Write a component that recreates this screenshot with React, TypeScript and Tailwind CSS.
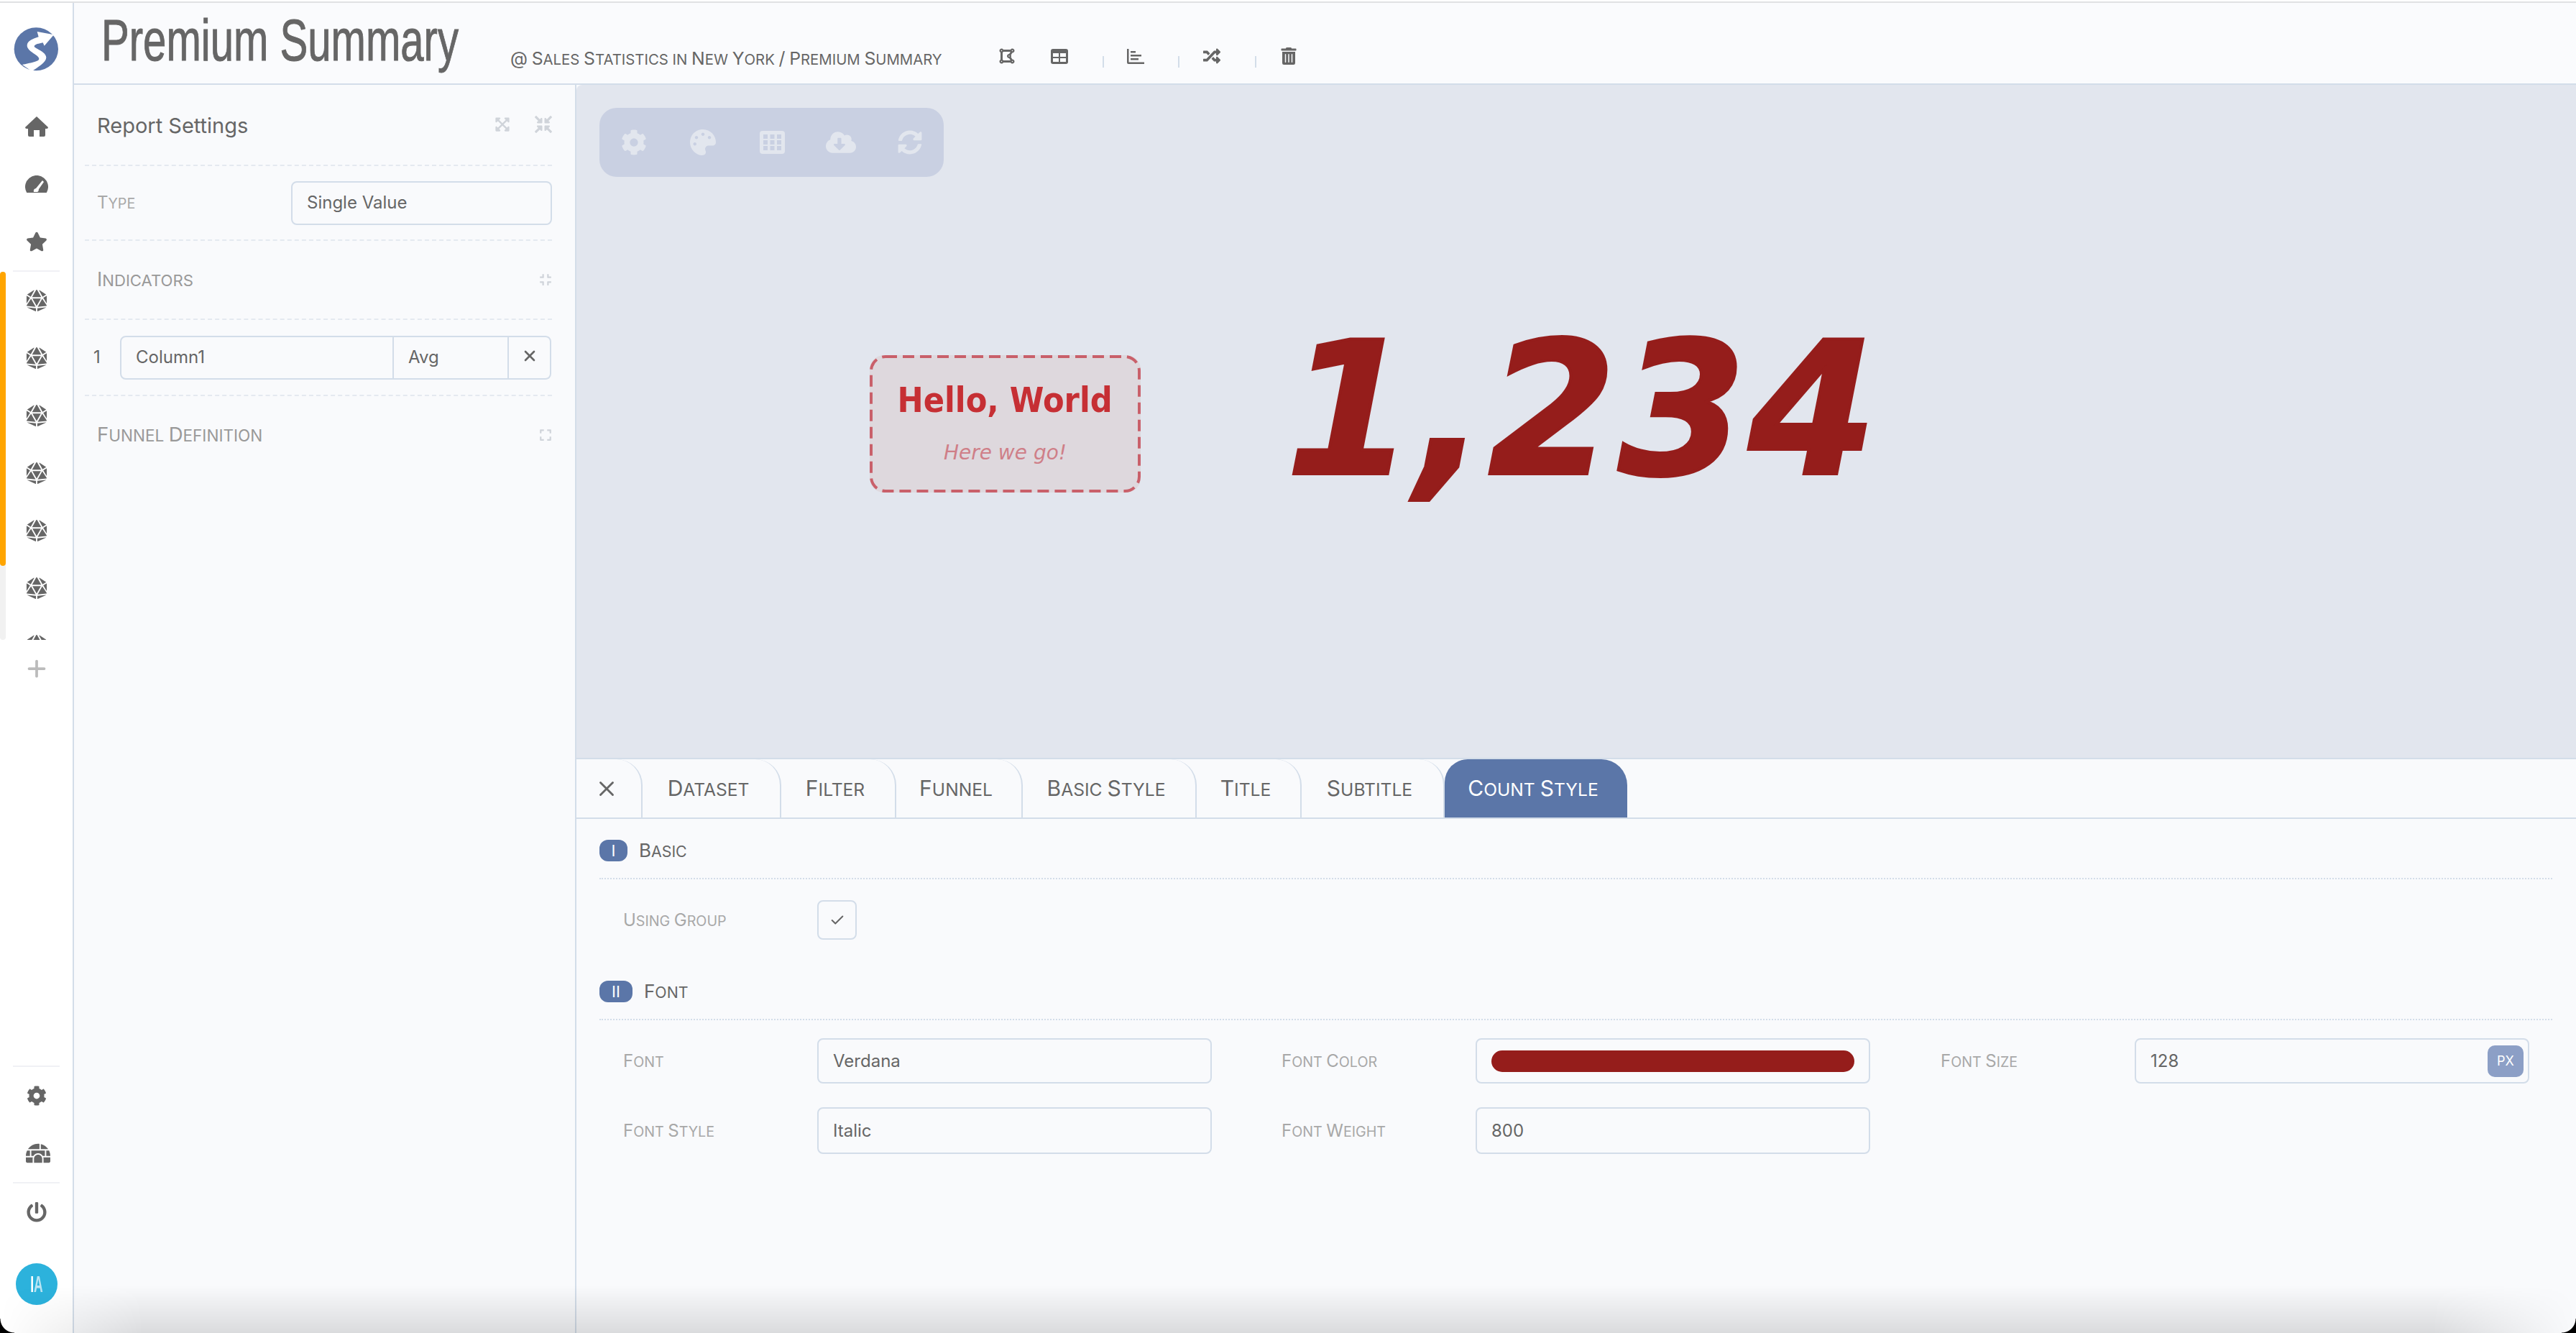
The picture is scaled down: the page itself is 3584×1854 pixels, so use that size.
import type { ReactNode } from "react";
import { Check, Plus, X } from "lucide-react";
import {
  FaCloudDownloadAlt,
  FaCog,
  FaCompress,
  FaCompressArrowsAlt,
  FaDiceD20,
  FaDrawPolygon,
  FaExpand,
  FaExpandArrowsAlt,
  FaIgloo,
  FaPalette,
  FaPowerOff,
  FaRandom,
  FaStar,
  FaSyncAlt,
  FaTrashAlt,
} from "react-icons/fa";

const sans = "font-['Inter','Liberation_Sans',sans-serif]";

// the app's small caps have capitals only a little taller than the rest
function SmallCaps({ text }: { text: string }) {
  return (
    <>
      {text.split(/([A-Z@/]+)/).map((part, i) =>
        i % 2 ? part : <span key={i} className="text-[0.82em] uppercase">{part}</span>
      )}
    </>
  );
}

function Logo() {
  return (
    <svg width="80" height="76" viewBox="0 0 240 228">
      <ellipse cx="118" cy="115" rx="92" ry="90" fill="#5b76a8" />
      <path
        d="M122 42 L192 55 L152 101 L146 88 C130 92 112 94 110 103 C108 112 160 125 160 150 C160 170 125 190 100 208 L60 180 C90 172 130 168 130 155 C130 140 80 125 80 100 C80 80 105 72 128 64 Z"
        fill="#ffffff"
      />
    </svg>
  );
}

function HomeIcon() {
  return (
    <svg width="32" height="28" viewBox="0 0 32 28" fill="currentColor">
      <path d="M16 0 L32 15 Q32 17 30 17 H28 V26 Q28 28 26 28 H20 V19 H12 V28 H6 Q4 28 4 26 V17 H2 Q0 17 0 15 Z" />
    </svg>
  );
}

function GaugeIcon() {
  return (
    <svg width="32" height="24" viewBox="0 0 32 24">
      <path d="M2.2 24 A16 16 0 1 1 29.8 24 Z" fill="currentColor" />
      <path d="M24 7 L26 9 L19 19 Q19 22 17 23 H12 Q11 19 15 18 Z" fill="#ffffff" />
    </svg>
  );
}

function TableIcon() {
  return (
    <svg width="24" height="21" viewBox="0 0 24 21">
      <rect width="24" height="21" rx="3" fill="currentColor" />
      <rect x="3" y="6" width="8" height="5" fill="#fafbfd" />
      <rect x="13" y="6" width="8" height="5" fill="#fafbfd" />
      <rect x="3" y="13" width="8" height="5" fill="#fafbfd" />
      <rect x="13" y="13" width="8" height="5" fill="#fafbfd" />
    </svg>
  );
}

function BarsIcon() {
  return (
    <svg width="24" height="21" viewBox="0 0 24 21" fill="currentColor">
      <path d="M0 0 H2.5 V18.5 H24 V21 H2 Q0 21 0 19 Z" />
      <rect x="5" y="3" width="7" height="2.5" />
      <rect x="5" y="8" width="15" height="2.5" />
      <rect x="5" y="13" width="11" height="2.5" />
    </svg>
  );
}

function GridIcon() {
  const cells = [0, 1, 2];
  return (
    <svg width="35" height="32" viewBox="0 0 35 32">
      <rect width="35" height="32" rx="4" fill="currentColor" />
      {cells.flatMap((r) =>
        cells.map((c) => <rect key={`${r}-${c}`} x={5 + c * 9.5} y={5 + r * 8} width="6" height="6" fill="#c9d0e2" />)
      )}
    </svg>
  );
}

function SideIcon({ children, className = "h-[80px]" }: { children: ReactNode; className?: string }) {
  return <div className={`flex w-full shrink-0 items-center justify-center text-[#666666] ${className}`}>{children}</div>;
}

function Sidebar() {
  return (
    <aside className="flex w-[103px] shrink-0 flex-col border-r-2 border-[#d3dde9] bg-white">
      <div className="flex h-[132px] shrink-0 items-center justify-center pb-[4px]">
        <Logo />
      </div>
      <SideIcon><HomeIcon /></SideIcon>
      <SideIcon><GaugeIcon /></SideIcon>
      <SideIcon><FaStar size={30} /></SideIcon>
      <div className="mx-[18px] h-[2px] shrink-0 bg-[#f0f1f5]" />
      <div className="relative h-[512px] shrink-0 overflow-hidden">
        <div className="absolute left-0 top-0 h-full w-[8px] rounded-[4px] bg-[#f1f1f1]" />
        <div className="absolute left-0 top-0 h-[409px] w-[8px] rounded-[4px] bg-[#ffa500]" />
        {[0, 1, 2, 3, 4, 5, 6].map((i) => (
          <SideIcon key={i}><FaDiceD20 size={30} /></SideIcon>
        ))}
      </div>
      <SideIcon className="h-[80px] !text-[#bbbbbb]"><Plus size={36} strokeWidth={2.5} /></SideIcon>
      <div className="flex-1" />
      <div className="mx-[18px] h-[2px] shrink-0 bg-[#f0f1f5]" />
      <SideIcon><FaCog size={28} /></SideIcon>
      <SideIcon className="h-[80px] pl-[4px]"><FaIgloo size={34} /></SideIcon>
      <div className="mx-[18px] h-[2px] shrink-0 bg-[#f0f1f5]" />
      <SideIcon><FaPowerOff size={28} /></SideIcon>
      <div className="flex h-[128px] shrink-0 items-center justify-center pb-[8px]">
        <div className="flex h-[58px] w-[58px] items-center justify-center rounded-full bg-[#2cb2dc] font-['Liberation_Sans',sans-serif] text-[32px] font-bold leading-none text-white">
          <span className="scale-x-[0.55]">I<span className="text-[#b9e4f3]">A</span></span>
        </div>
      </div>
    </aside>
  );
}

function Sep() {
  return <span className="h-[16px] w-[2px] translate-y-[8px] bg-[#d3dde9]" />;
}

function Header() {
  return (
    <header className="flex h-[114px] shrink-0 items-start border-b-2 border-[#d3dde9] bg-[#fafbfd] pl-[38px]">
      <h1 className="mt-[2px] w-[569px] origin-left scale-x-[0.717] whitespace-nowrap font-['Liberation_Sans',sans-serif] text-[81px] leading-[100px] text-[#666666] [-webkit-text-stroke:1px_#666666]">
        Premium Summary
      </h1>
      <div className={`mt-[60px] w-[680px] text-[24.8px] leading-[34px] text-[#666666] ${sans}`}>
        <SmallCaps text="@ Sales Statistics in New York / Premium Summary" />
      </div>
      <div className="mt-[62px] flex items-center text-[#666666]">
        <span className="flex w-[22px] justify-center"><FaDrawPolygon size={24} /></span>
        <span className="ml-[50px] flex w-[24px] justify-center"><TableIcon /></span>
        <span className="ml-[48px] flex"><Sep /></span>
        <span className="ml-[32px] flex w-[24px] justify-center"><BarsIcon /></span>
        <span className="ml-[47px] flex"><Sep /></span>
        <span className="ml-[33px] flex w-[24px] justify-center"><FaRandom size={24} /></span>
        <span className="ml-[48px] flex"><Sep /></span>
        <span className="ml-[33px] flex w-[24px] justify-center"><FaTrashAlt size={24} /></span>
      </div>
    </header>
  );
}

function Dashed() {
  return <div className="h-0 border-t-2 border-dashed border-[#e4e9f0]" />;
}

function SettingsPanel() {
  return (
    <section className={`w-[699px] shrink-0 border-r-2 border-[#d3dde9] bg-[#f9fafc] pl-[15px] pr-[32px] ${sans}`}>
      <div className="flex h-[111px] items-center justify-between pl-[17px]">
        <span className="pt-[2px] text-[29px] text-[#666666]">Report Settings</span>
        <span className="flex items-center gap-[34px] pb-[2px] text-[#d0d4da]">
          <FaExpandArrowsAlt size={22} />
          <FaCompressArrowsAlt size={24} />
        </span>
      </div>
      <Dashed />
      <div className="flex h-[102px] items-center pl-[17px]">
        <span className="w-[270px] text-[24px] text-[#a8a8a8]"><SmallCaps text="Type" /></span>
        <div className="flex h-[61px] w-[363px] items-center rounded-[8px] border-2 border-[#d3dde9] pl-[20px] text-[24px] text-[#666666]">
          Single Value
        </div>
      </div>
      <Dashed />
      <div className="flex h-[108px] items-center justify-between pl-[17px]">
        <span className="text-[27px] text-[#999999]"><SmallCaps text="Indicators" /></span>
        <FaCompress size={18} className="text-[#d0d4da]" />
      </div>
      <Dashed />
      <div className="flex h-[104px] items-center">
        <span className="w-[49px] pl-[12px] text-[24px] text-[#666666]">1</span>
        <div className="flex h-[61px] w-[600px] items-stretch rounded-[8px] border-2 border-[#d3dde9] text-[24px] text-[#666666]">
          <div className="flex w-[379px] items-center border-r-2 border-[#d3dde9] pl-[20px]">Column1</div>
          <div className="flex w-[160px] items-center border-r-2 border-[#d3dde9] pl-[20px]">Avg</div>
          <div className="flex flex-1 items-center justify-center pb-[4px]"><X size={24} strokeWidth={2.6} /></div>
        </div>
      </div>
      <Dashed />
      <div className="flex h-[108px] items-center justify-between pl-[17px]">
        <span className="text-[27.5px] text-[#999999]"><SmallCaps text="Funnel Definition" /></span>
        <FaExpand size={18} className="text-[#d0d4da]" />
      </div>
    </section>
  );
}

function Canvas() {
  return (
    <div className="h-[936px] shrink-0 overflow-hidden rounded-tl-[8px] bg-[#e2e6ee]">
      <div className="ml-[32px] mt-[32px] flex h-[96px] w-[479px] items-center rounded-[24px] bg-[#c9d0e2] text-[#e2e6ee]">
        <span className="flex w-[96px] shrink-0 justify-center"><FaCog size={36} /></span>
        <span className="flex w-[96px] shrink-0 justify-center"><FaPalette size={36} /></span>
        <span className="flex w-[96px] shrink-0 justify-center"><GridIcon /></span>
        <span className="flex w-[96px] shrink-0 justify-center"><FaCloudDownloadAlt size={42} /></span>
        <span className="flex w-[96px] shrink-0 justify-center"><FaSyncAlt size={34} /></span>
      </div>
      <div className="ml-[408px] mt-[248px] flex items-start font-['DejaVu_Sans',sans-serif]">
        <div className="relative flex h-[191px] w-[377px] flex-col items-center rounded-[20px] bg-[#ded8dd]">
          <svg className="absolute inset-0" width="377" height="191">
            <rect x="2" y="2" width="373" height="187" rx="20" fill="none" stroke="#c9606a" strokeWidth="4" strokeDasharray="16 8" />
          </svg>
          <div className="mt-[32px] origin-center scale-x-[0.9] whitespace-nowrap text-[48px] font-bold leading-[60px] text-[#c62f34]">
            Hello, World
          </div>
          <div className="mt-[24px] text-[28px] italic leading-[40px] text-[#cf7f88]">Here we go!</div>
        </div>
        <div className="ml-[202px] mt-[-74px] text-[256px] font-extrabold italic leading-[300px] tracking-[3px] text-[#951d1b] [-webkit-text-stroke:4px_#951d1b]">
          1,234
        </div>
      </div>
    </div>
  );
}

const tabs: [string, string][] = [
  ["Dataset", "w-[193px]"],
  ["Filter", "w-[160px]"],
  ["Funnel", "w-[176px]"],
  ["Basic Style", "w-[242px]"],
  ["Title", "w-[146px]"],
  ["Subtitle", "w-[199px]"],
];

function Tabs() {
  return (
    <div className={`flex h-[85px] shrink-0 border-y-2 border-[#d3dde9] text-[30px] text-[#666666] ${sans}`}>
      <div className="flex w-[92px] items-center rounded-tr-[36px] border-r-2 border-[#d3dde9] pl-[25px]">
        <X size={34} strokeWidth={2} />
      </div>
      {tabs.map(([label, w]) => (
        <div key={label} className={`flex items-center justify-center rounded-tr-[36px] border-r-2 border-[#d3dde9] pr-[8px] ${w}`}>
          <span><SmallCaps text={label} /></span>
        </div>
      ))}
      <div className="flex w-[254px] items-center justify-center rounded-tl-[32px] rounded-tr-[36px] bg-[#5b76a8] pr-[8px] text-white">
        <span><SmallCaps text="Count Style" /></span>
      </div>
    </div>
  );
}

function SectionTitle({ num, title, pill }: { num: string; title: string; pill: string }) {
  return (
    <div className="flex h-[55px] items-start border-b-2 border-dotted border-[#d3dde9]">
      <span className={`flex h-[30px] items-center justify-center rounded-[12px] bg-[#5b76a8] text-[22px] leading-none text-white ${pill}`}>
        {num}
      </span>
      <span className="ml-[16px] text-[26px] leading-[30px] text-[#666666]"><SmallCaps text={title} /></span>
    </div>
  );
}

function Field({ label, children }: { label: string; children: ReactNode }) {
  return (
    <div className="flex items-center">
      <span className="w-[270px] shrink-0 text-[24px] text-[#a8a8a8]"><SmallCaps text={label} /></span>
      {children}
    </div>
  );
}

function Box({ children, className = "" }: { children?: ReactNode; className?: string }) {
  return (
    <div className={`flex h-[63px] w-[549px] items-center rounded-[8px] border-2 border-[#d3dde9] text-[24px] text-[#666666] ${className}`}>
      {children}
    </div>
  );
}

function StylePanel() {
  return (
    <div className={`flex-1 bg-[#f9fafc] pl-[32px] pr-[33px] pt-[29px] ${sans}`}>
      <SectionTitle num="I" title="Basic" pill="w-[39px]" />
      <div className="flex h-[141px] items-start pl-[33px] pt-[29px]">
        <Field label="Using Group">
          <div className="flex h-[55px] w-[55px] items-center justify-center rounded-[8px] border-2 border-[#d3dde9] text-[#666666]">
            <Check size={22} strokeWidth={2.2} />
          </div>
        </Field>
      </div>
      <SectionTitle num="II" title="Font" pill="w-[46px]" />
      <div className="grid grid-cols-[916px_917px_1fr] gap-y-[33px] pl-[33px] pt-[25px]">
        <Field label="Font"><Box className="pl-[20px]">Verdana</Box></Field>
        <Field label="Font Color">
          <Box className="px-[20px]"><span className="h-[30px] w-full rounded-full bg-[#951d1b]" /></Box>
        </Field>
        <Field label="Font Size">
          <Box className="justify-between pl-[20px] pr-[6px]">
            128
            <span className="flex h-[44px] w-[50px] items-center justify-center rounded-[10px] bg-[#8c9fc6] text-[18px] uppercase text-white">px</span>
          </Box>
        </Field>
        <Field label="Font Style"><Box className="h-[65px] pl-[20px]">Italic</Box></Field>
        <Field label="Font Weight"><Box className="h-[65px] pl-[20px]">800</Box></Field>
      </div>
    </div>
  );
}

export default function App() {
  return (
    <div className="relative flex h-[1854px] w-[3584px] flex-col overflow-hidden bg-white">
      <div className="h-[4px] shrink-0 border-b-2 border-[#e0e1e3]" />
      <div className="flex min-h-0 flex-1">
        <Sidebar />
        <div className="flex min-w-0 flex-1 flex-col">
          <Header />
          <div className="flex min-h-0 flex-1">
            <SettingsPanel />
            <main className="flex min-w-0 flex-1 flex-col bg-[#f9fafc]">
              <Canvas />
              <Tabs />
              <StylePanel />
            </main>
          </div>
        </div>
      </div>
      {/* window shadow along the bottom of the screenshot */}
      <div className="pointer-events-none absolute inset-x-0 bottom-0 h-[66px] bg-gradient-to-b from-transparent to-[#0000001f] [mask-image:linear-gradient(to_right,transparent,black_200px,black_calc(100%-200px),transparent)]" />
      <div className="pointer-events-none absolute bottom-0 left-0 h-[20px] w-[20px] bg-[radial-gradient(circle_at_100%_0,transparent_19px,#000_20px)]" />
      <div className="pointer-events-none absolute bottom-0 right-0 h-[20px] w-[20px] bg-[radial-gradient(circle_at_0_0,transparent_19px,#000_20px)]" />
    </div>
  );
}
